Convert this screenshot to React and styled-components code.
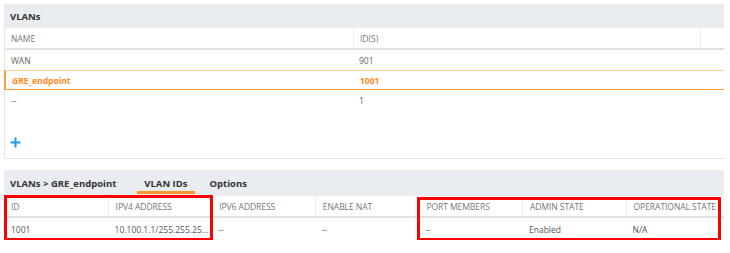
import React from "react";
import styled, { createGlobalStyle } from "styled-components";

const GlobalStyle = createGlobalStyle`
  html, body {
    margin: 0;
    background: #ffffff;
    font-family: "Open Sans", "Liberation Sans", sans-serif;
  }
`;

const vlans = [
  { id: 1, name: "WAN", ids: "901" },
  { id: 2, name: "GRE_endpoint", ids: "1001", selected: true },
  { id: 3, name: "--", ids: "1" },
];

const detailCols = [
  "ID",
  "IPV4 ADDRESS",
  "IPV6 ADDRESS",
  "ENABLE NAT",
  "PORT MEMBERS",
  "ADMIN STATE",
  "OPERATIONAL STATE",
];

const detailRow = ["1001", "10.100.1.1/255.255.25...", "--", "--", "--", "Enabled", "N/A"];

const App = () => {
  return (
    <Page>
      <GlobalStyle />
      <Panel>
        <PanelHeader>VLANs</PanelHeader>
        <PanelBody>
          <HeadRow>
            <HeadCell>NAME</HeadCell>
            <HeadCell $divider>ID(S)</HeadCell>
            <HeadCell $divider />
          </HeadRow>
          {vlans.map((v) => (
            <Row key={v.id} $selected={v.selected}>
              <Cell>{v.name}</Cell>
              <Cell>{v.ids}</Cell>
              <Cell />
            </Row>
          ))}
          <AddRow>
            <svg width="11" height="11" viewBox="0 0 11 11">
              <path d="M5.5 0.5v10M0.5 5.5h10" stroke="#1d9be6" strokeWidth="2" fill="none" />
            </svg>
          </AddRow>
        </PanelBody>
      </Panel>

      <Detail>
        <TabBar>
          <Crumb>VLANs &gt; GRE_endpoint</Crumb>
          <Tab $active>VLAN IDs</Tab>
          <Tab>Options</Tab>
        </TabBar>
        <DetailGrid>
          {detailCols.map((c, i) => (
            <DHead key={c} $col={i + 1} $divider={i > 0}>
              {c}
            </DHead>
          ))}
          {detailRow.map((c, i) => (
            <DCell key={i} $col={i + 1}>
              {c}
            </DCell>
          ))}
          <Mark $from={1} $to={3} $top={-1} $left={0} $right={-2} />
          <Mark $from={5} $to={8} $top={1} $left={-1} $right={3} />
        </DetailGrid>
      </Detail>
    </Page>
  );
};

export default App;

const Page = styled.div`
  padding: 4px 0 0 4px;
  width: 720px;
`;

const Panel = styled.div`
  width: 720px;
`;

const PanelHeader = styled.div`
  height: 24px;
  background: #e9ecf0;
  display: flex;
  align-items: center;
  padding-left: 6px;
  font-size: 9.5px;
  font-weight: 700;
  color: #333;
`;

const PanelBody = styled.div`
  border-left: 1px solid #e4e4e4;
  border-bottom: 1px solid #e4e4e4;
`;

const HeadRow = styled.div`
  display: grid;
  grid-template-columns: 348px 347px 1fr;
  height: 22px;
  box-sizing: border-box;
  border-bottom: 2px solid #e1e1e1;
`;

const HeadCell = styled.div`
  display: flex;
  align-items: center;
  padding-left: 6px;
  font-size: 8.5px;
  color: #777;
  border-left: ${(p) => (p.$divider ? "1px solid #efefef" : "none")};
`;

const Row = styled.div`
  display: grid;
  grid-template-columns: 348px 347px 1fr;
  height: 20px;
  box-sizing: border-box;
  margin-left: ${(p) => (p.$selected ? "-1px" : "0")};
  border-top: ${(p) => (p.$selected ? "1px solid #ffcc95" : "none")};
  border-bottom: ${(p) => (p.$selected ? "1px solid #ff9d3a" : "none")};
  border-left: ${(p) => (p.$selected ? "2px solid #ff9d3a" : "none")};
  color: ${(p) => (p.$selected ? "#ff8a1c" : "#666")};
  font-weight: ${(p) => (p.$selected ? 700 : 400)};
`;

const Cell = styled.div`
  display: flex;
  align-items: center;
  padding-left: 6px;
  font-size: 8.5px;
  white-space: nowrap;
`;

const AddRow = styled.div`
  height: 48px;
  box-sizing: border-box;
  display: flex;
  align-items: flex-start;
  padding: 27px 0 0 5px;
`;

const Detail = styled.div`
  margin-top: 11px;
  width: 720px;
`;

const TabBar = styled.div`
  height: 26px;
  background: #e9ecf0;
  display: flex;
  align-items: flex-start;
  padding-left: 6px;
  font-size: 9.5px;
  font-weight: 700;
  color: #333;
`;

const Crumb = styled.div`
  display: flex;
  align-items: center;
  height: 26px;
  margin-right: 21px;
`;

const Tab = styled.div`
  display: flex;
  align-items: center;
  height: 24px;
  padding: 5px 7px 0;
  margin-right: 8px;
  box-sizing: border-box;
  border-bottom: 3px solid ${(p) => (p.$active ? "#ff952b" : "transparent")};
`;

const DetailGrid = styled.div`
  display: grid;
  grid-template-columns: repeat(6, 103.6px) 98.4px;
  grid-template-rows: 22px 22px;
`;

const DHead = styled.div`
  grid-row: 1;
  grid-column: ${(p) => p.$col};
  display: flex;
  align-items: center;
  padding-left: 7px;
  box-sizing: border-box;
  font-size: 8.5px;
  letter-spacing: -0.05px;
  color: #777;
  border-bottom: 2px solid #e1e1e1;
  border-left: ${(p) => (p.$divider ? "1px solid #eeeeee" : "none")};
  white-space: nowrap;
`;

const DCell = styled.div`
  grid-row: 2;
  grid-column: ${(p) => p.$col};
  display: flex;
  align-items: center;
  padding-left: 7px;
  font-size: 8.5px;
  color: #555;
  white-space: nowrap;
  overflow: hidden;
`;

const Mark = styled.div`
  grid-row: 1 / 3;
  grid-column: ${(p) => p.$from} / ${(p) => p.$to};
  margin: ${(p) => p.$top}px ${(p) => p.$right}px -1px ${(p) => p.$left}px;
  border: 3px solid #ff0000;
  pointer-events: none;
`;
